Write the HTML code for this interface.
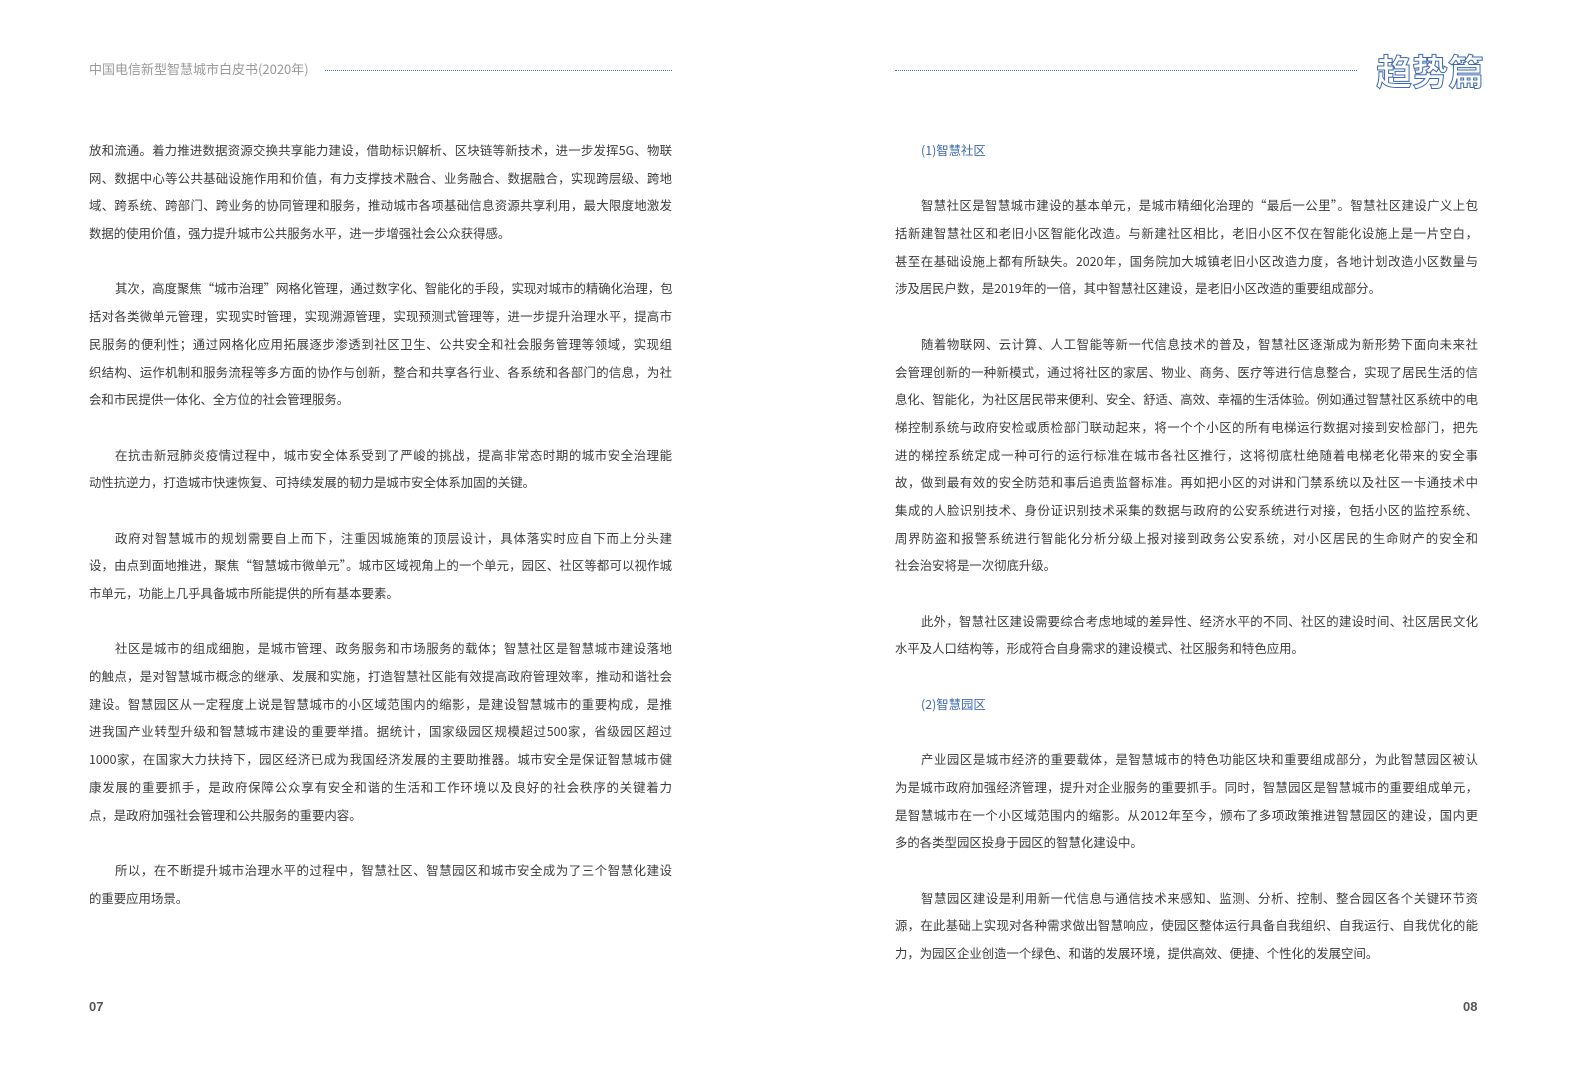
<!DOCTYPE html>
<html><head><meta charset="utf-8"><style>
html,body{margin:0;padding:0;background:#fff;}
body{width:1587px;height:1077px;position:relative;overflow:hidden;font-family:"Noto Sans CJK SC","Liberation Sans",sans-serif;}
.hd{position:absolute;top:59px;left:89px;font-size:13px;color:#9a9a9a;line-height:20px;}
.dot{position:absolute;height:0;border-top:1px dotted #4a6fb5;top:70px;}
.title{position:absolute;left:1376px;top:46px;font-size:36px;line-height:48px;font-weight:bold;color:#fff;-webkit-text-stroke:1px #3f68b3;font-family:"Noto Sans CJK SC",sans-serif;}
.col{position:absolute;top:137px;width:583px;font-size:12.4px;line-height:27.7px;color:#3c3c3c;}
.col div{height:27.7px;white-space:nowrap;text-align:justify;text-align-last:justify;}
.col div.l{text-align-last:left;}
.col div.i{padding-left:26px;}
.col div.h{color:#3f68b3;text-align-last:left;padding-left:26px;}
.pn{position:absolute;top:999px;font-size:13px;font-weight:bold;color:#555;font-family:"Liberation Sans",sans-serif;}
</style></head><body>
<div class="hd">中国电信新型智慧城市白皮书(2020年)</div>
<div class="dot" style="left:325px;width:347px"></div>
<div class="dot" style="left:895px;width:462px"></div>
<div class="title">趋势篇</div>

<div class="col" style="left:89px">
<div>放和流通。着力推进数据资源交换共享能力建设，借助标识解析、区块链等新技术，进一步发挥5G、物联</div>
<div>网、数据中心等公共基础设施作用和价值，有力支撑技术融合、业务融合、数据融合，实现跨层级、跨地</div>
<div>域、跨系统、跨部门、跨业务的协同管理和服务，推动城市各项基础信息资源共享利用，最大限度地激发</div>
<div class="l">数据的使用价值，强力提升城市公共服务水平，进一步增强社会公众获得感。</div>
<div class="l"></div>
<div class="i">其次，高度聚焦“城市治理”网格化管理，通过数字化、智能化的手段，实现对城市的精确化治理，包</div>
<div>括对各类微单元管理，实现实时管理，实现溯源管理，实现预测式管理等，进一步提升治理水平，提高市</div>
<div>民服务的便利性；通过网格化应用拓展逐步渗透到社区卫生、公共安全和社会服务管理等领域，实现组</div>
<div>织结构、运作机制和服务流程等多方面的协作与创新，整合和共享各行业、各系统和各部门的信息，为社</div>
<div class="l">会和市民提供一体化、全方位的社会管理服务。</div>
<div class="l"></div>
<div class="i">在抗击新冠肺炎疫情过程中，城市安全体系受到了严峻的挑战，提高非常态时期的城市安全治理能</div>
<div class="l">动性抗逆力，打造城市快速恢复、可持续发展的韧力是城市安全体系加固的关键。</div>
<div class="l"></div>
<div class="i">政府对智慧城市的规划需要自上而下，注重因城施策的顶层设计，具体落实时应自下而上分头建</div>
<div>设，由点到面地推进，聚焦“智慧城市微单元”。城市区域视角上的一个单元，园区、社区等都可以视作城</div>
<div class="l">市单元，功能上几乎具备城市所能提供的所有基本要素。</div>
<div class="l"></div>
<div class="i">社区是城市的组成细胞，是城市管理、政务服务和市场服务的载体；智慧社区是智慧城市建设落地</div>
<div>的触点，是对智慧城市概念的继承、发展和实施，打造智慧社区能有效提高政府管理效率，推动和谐社会</div>
<div>建设。智慧园区从一定程度上说是智慧城市的小区域范围内的缩影，是建设智慧城市的重要构成，是推</div>
<div>进我国产业转型升级和智慧城市建设的重要举措。据统计，国家级园区规模超过500家，省级园区超过</div>
<div>1000家，在国家大力扶持下，园区经济已成为我国经济发展的主要助推器。城市安全是保证智慧城市健</div>
<div>康发展的重要抓手，是政府保障公众享有安全和谐的生活和工作环境以及良好的社会秩序的关键着力</div>
<div class="l">点，是政府加强社会管理和公共服务的重要内容。</div>
<div class="l"></div>
<div class="i">所以，在不断提升城市治理水平的过程中，智慧社区、智慧园区和城市安全成为了三个智慧化建设</div>
<div class="l">的重要应用场景。</div>
</div>

<div class="col" style="left:895px">
<div class="h">(1)智慧社区</div>
<div class="l"></div>
<div class="i">智慧社区是智慧城市建设的基本单元，是城市精细化治理的“最后一公里”。智慧社区建设广义上包</div>
<div>括新建智慧社区和老旧小区智能化改造。与新建社区相比，老旧小区不仅在智能化设施上是一片空白，</div>
<div>甚至在基础设施上都有所缺失。2020年，国务院加大城镇老旧小区改造力度，各地计划改造小区数量与</div>
<div class="l">涉及居民户数，是2019年的一倍，其中智慧社区建设，是老旧小区改造的重要组成部分。</div>
<div class="l"></div>
<div class="i">随着物联网、云计算、人工智能等新一代信息技术的普及，智慧社区逐渐成为新形势下面向未来社</div>
<div>会管理创新的一种新模式，通过将社区的家居、物业、商务、医疗等进行信息整合，实现了居民生活的信</div>
<div>息化、智能化，为社区居民带来便利、安全、舒适、高效、幸福的生活体验。例如通过智慧社区系统中的电</div>
<div>梯控制系统与政府安检或质检部门联动起来，将一个个小区的所有电梯运行数据对接到安检部门，把先</div>
<div>进的梯控系统定成一种可行的运行标准在城市各社区推行，这将彻底杜绝随着电梯老化带来的安全事</div>
<div>故，做到最有效的安全防范和事后追责监督标准。再如把小区的对讲和门禁系统以及社区一卡通技术中</div>
<div>集成的人脸识别技术、身份证识别技术采集的数据与政府的公安系统进行对接，包括小区的监控系统、</div>
<div>周界防盗和报警系统进行智能化分析分级上报对接到政务公安系统，对小区居民的生命财产的安全和</div>
<div class="l">社会治安将是一次彻底升级。</div>
<div class="l"></div>
<div class="i">此外，智慧社区建设需要综合考虑地域的差异性、经济水平的不同、社区的建设时间、社区居民文化</div>
<div class="l">水平及人口结构等，形成符合自身需求的建设模式、社区服务和特色应用。</div>
<div class="l"></div>
<div class="h">(2)智慧园区</div>
<div class="l"></div>
<div class="i">产业园区是城市经济的重要载体，是智慧城市的特色功能区块和重要组成部分，为此智慧园区被认</div>
<div>为是城市政府加强经济管理，提升对企业服务的重要抓手。同时，智慧园区是智慧城市的重要组成单元，</div>
<div>是智慧城市在一个小区域范围内的缩影。从2012年至今，颁布了多项政策推进智慧园区的建设，国内更</div>
<div class="l">多的各类型园区投身于园区的智慧化建设中。</div>
<div class="l"></div>
<div class="i">智慧园区建设是利用新一代信息与通信技术来感知、监测、分析、控制、整合园区各个关键环节资</div>
<div>源，在此基础上实现对各种需求做出智慧响应，使园区整体运行具备自我组织、自我运行、自我优化的能</div>
<div class="l">力，为园区企业创造一个绿色、和谐的发展环境，提供高效、便捷、个性化的发展空间。</div>
</div>

<div class="pn" style="left:89px">07</div>
<div class="pn" style="left:1463px">08</div>
</body></html>
